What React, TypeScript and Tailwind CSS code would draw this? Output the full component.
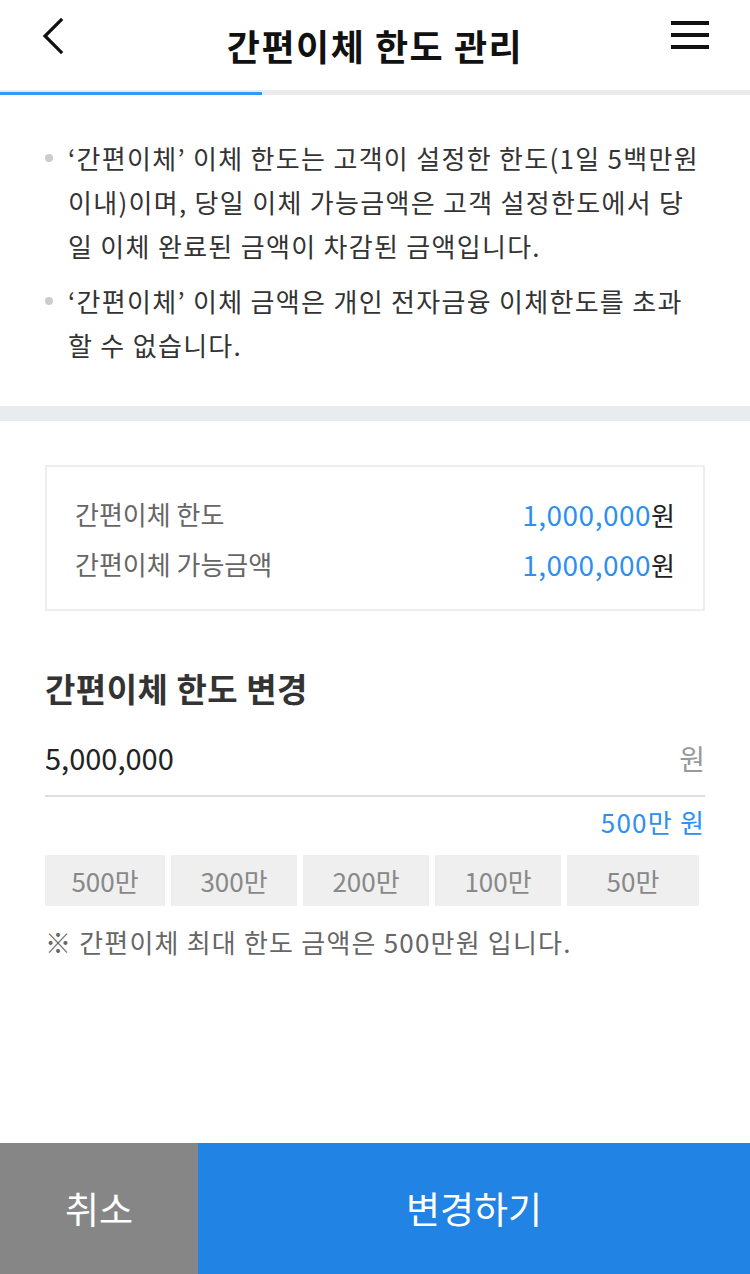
import React from "react";

const font = { fontFamily: '"Noto Sans CJK KR", "Noto Sans", sans-serif' };

export default function App() {
  const chips: [string, string][] = [
    ["500만", "w-[120px]"],
    ["300만", "w-[126px]"],
    ["200만", "w-[126px]"],
    ["100만", "w-[126px]"],
    ["50만", "w-[132px]"],
  ];
  return (
    <div className="flex min-h-[1274px] w-[750px] flex-col bg-white text-[#333]" style={font}>
      {/* Header */}
      <header className="relative flex h-[90px] items-center justify-center">
        <button className="absolute left-[38px] top-[16px] flex h-[40px] w-[30px] items-center justify-center">
          <svg width="24" height="36" viewBox="0 0 24 36" fill="none">
            <polyline points="20,2 4,18 20,34" stroke="#111" strokeWidth="3.2" strokeLinecap="square" />
          </svg>
        </button>
        <h1 className="text-[36px] font-bold leading-none tracking-[1.5px] text-[#111]">간편이체 한도 관리</h1>
        <button className="absolute right-[41px] top-[21px] flex w-[38px] flex-col gap-[8px]">
          <span className="block h-[4px] w-[38px] bg-[#111]" />
          <span className="block h-[4px] w-[38px] bg-[#111]" />
          <span className="block h-[4px] w-[38px] bg-[#111]" />
        </button>
      </header>
      {/* Progress */}
      <div className="flex h-[5px] items-end bg-[#ebebeb]">
        <div className="h-[3px] w-[262px] bg-[#3399f3]" />
      </div>

      {/* Notice */}
      <section className="px-[45px] pb-[39px] pt-[41px] text-[26px] leading-[44px] tracking-[1.3px] text-[#333]">
        <div className="flex">
          <span className="mr-[15px] mt-[18px] h-[8px] w-[8px] shrink-0 rounded-full bg-[#cccccc]" />
          <p className="whitespace-nowrap">
            ‘간편이체’ 이체 한도는 고객이 설정한 한도(1일 5백만원
            <br />
            이내)이며, 당일 이체 가능금액은 고객 설정한도에서 당
            <br />
            일 이체 완료된 금액이 차감된 금액입니다.
          </p>
        </div>
        <div className="mt-[11px] flex">
          <span className="mr-[15px] mt-[18px] h-[8px] w-[8px] shrink-0 rounded-full bg-[#cccccc]" />
          <p className="whitespace-nowrap">
            ‘간편이체’ 이체 금액은 개인 전자금융 이체한도를 초과
            <br />
            할 수 없습니다.
          </p>
        </div>
      </section>

      <div className="h-[15px] bg-[#e9ecef]" />

      {/* Main */}
      <section className="px-[45px] pt-[44px]">
        <div className="border-2 border-[#eeeeee] px-[28px] pb-[20px] pt-[22px] text-[26px] leading-[50px]">
          <div className="flex h-[50px] items-center justify-between">
            <span className="text-[#666]">간편이체 한도</span>
            <span className="flex items-baseline leading-none text-[#222]">
              <span className="text-[28px] tracking-[0.5px] text-[#2d8ff0]">1,000,000</span>
              <span className="text-[26px]">원</span>
            </span>
          </div>
          <div className="flex h-[50px] items-center justify-between">
            <span className="text-[#666]">간편이체 가능금액</span>
            <span className="flex items-baseline leading-none text-[#222]">
              <span className="text-[28px] tracking-[0.5px] text-[#2d8ff0]">1,000,000</span>
              <span className="text-[26px]">원</span>
            </span>
          </div>
        </div>

        <h2 className="mt-[57px] text-[33px] font-bold leading-[40px] tracking-[0.5px] text-[#333]">간편이체 한도 변경</h2>

        <div className="mt-[12px] flex h-[77px] items-center justify-between border-b-2 border-[#dddddd]">
          <span className="text-[29px] text-[#222]">5,000,000</span>
          <span className="text-[28px] text-[#999]">원</span>
        </div>

        <div className="mt-[7px] text-right text-[26px] leading-[36px] tracking-[1.2px] text-[#2d8ff0]">500만 원</div>

        <div className="mt-[15px] flex gap-[6px]">
          {chips.map(([c, w]) => (
            <button
              key={c}
              className={`flex h-[51px] items-center justify-center bg-[#efefef] text-[26px] text-[#888] ${w}`}
            >
              {c}
            </button>
          ))}
        </div>

        <p className="mt-[18px] text-[26px] leading-[36px] tracking-[1.2px] text-[#666]">※ 간편이체 최대 한도 금액은 500만원 입니다.</p>
      </section>

      {/* Footer */}
      <footer className="mt-auto flex h-[131px]">
        <button className="flex w-[198px] items-center justify-center bg-[#868686] text-[37px] text-white">취소</button>
        <button className="flex flex-1 items-center justify-center bg-[#2183e3] text-[37px] text-white">변경하기</button>
      </footer>
    </div>
  );
}
